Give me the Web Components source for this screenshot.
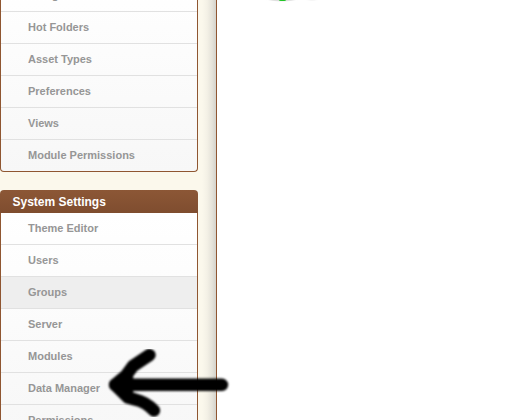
<!DOCTYPE html>
<html lang="en">
<head>
<meta charset="utf-8">
<title>System Settings</title>
<style>
html,body{margin:0;height:420px;overflow:hidden;background:#fff}
</style>
</head>
<body>
<admin-page>
  <menu-panel>
    <menu-item>Categories</menu-item>
    <menu-item>Hot Folders</menu-item>
    <menu-item>Asset Types</menu-item>
    <menu-item>Preferences</menu-item>
    <menu-item>Views</menu-item>
    <menu-item>Module Permissions</menu-item>
  </menu-panel>
  <menu-panel heading="System Settings">
    <menu-item>Theme Editor</menu-item>
    <menu-item>Users</menu-item>
    <menu-item active>Groups</menu-item>
    <menu-item>Server</menu-item>
    <menu-item>Modules</menu-item>
    <menu-item>Data Manager</menu-item>
    <menu-item>Permissions</menu-item>
  </menu-panel>
</admin-page>
<script>
class AdminPage extends HTMLElement {
  constructor() {
    super();
    this.attachShadow({mode: 'open'}).innerHTML = `
<style>
:host{display:flex;position:relative;width:524px;height:420px;overflow:hidden;background:#fff;font-family:"Liberation Sans",Arial,sans-serif}
aside{box-sizing:border-box;flex:none;width:217px;height:420px;overflow:hidden;border-right:1px solid #8f5631;
 background:linear-gradient(90deg,#fbf8ec 0,#fbf8ec 202px,#f4f1e6 207px,#e5e3da 212px,#d4d3cd 216px)}
nav{display:flex;flex-direction:column;gap:18px;width:198px;margin-top:-20px}
main{flex:1;overflow:hidden}
.hint{display:block;margin-left:45px}
.arrow{position:absolute;left:100px;top:340px}
</style>
<aside><nav><slot></slot></nav></aside>
<main><svg class="hint" width="70" height="6" viewBox="0 0 70 6">
<defs><filter id="h" x="-20%" y="-200%" width="140%" height="500%"><feGaussianBlur stdDeviation="1.4 .6"/></filter><filter id="g" x="-50%" y="-200%" width="200%" height="500%"><feGaussianBlur stdDeviation=".7 .3"/></filter></defs>
<ellipse cx="20" cy="-.5" rx="13" ry="1.7" fill="#dedede" filter="url(#h)"/>
<ellipse cx="50" cy="-.8" rx="7" ry="1.2" fill="#e6e6e6" filter="url(#h)"/>
<ellipse cx="20.5" cy="-.3" rx="3.8" ry="1.3" fill="#20c528" filter="url(#g)"/>
</svg></main>
<svg class="arrow" width="140" height="80" viewBox="0 0 140 80">
<defs><filter id="b" x="-10%" y="-10%" width="120%" height="120%"><feGaussianBlur stdDeviation="1.1"/></filter></defs>
<g fill="none" stroke="#000" stroke-width="12.4" stroke-linecap="round" stroke-linejoin="round" filter="url(#b)">
<path d="M122 44.8H15L26 35.5L33 26L49.5 15"/><path d="M15 44.8L28 57.5L35 59.5Q46 62 54 70.5"/><path fill="#000" d="M16 45L27 37V54Z"/></g>
</svg>`;
  }
}
class MenuPanel extends HTMLElement {
  constructor() {
    super();
    const h = this.getAttribute('heading');
    this.attachShadow({mode: 'open'}).innerHTML = `
<style>
:host{display:block;flex:none;box-sizing:border-box;width:198px}
header{box-sizing:border-box;height:23px;padding-left:12.5px;border-radius:4px 4px 0 0;background:linear-gradient(#8c5736,#7f4d2f);color:#fff;font-weight:bold;font-size:12px;line-height:24px}
.list{box-sizing:border-box;border:1px solid #8f5631;border-top:0;border-radius:0 0 4px 4px;overflow:hidden;background:linear-gradient(#fff,#f7f7f7)}
</style>
${h ? '<header></header>' : ''}<div class="list"><slot></slot></div>`;
    if (h) this.shadowRoot.querySelector('header').textContent = h;
  }
}
class MenuItem extends HTMLElement {
  constructor() {
    super();
    this.attachShadow({mode: 'open'}).innerHTML = `
<style>
:host{display:block;box-sizing:border-box;height:32px;padding-left:27px;border-bottom:1px solid #e1e1e1;color:#969696;font-weight:bold;font-size:11px;line-height:31px}
:host([active]){background:#eee}
:host(:last-child){height:31px;border-bottom:0}
</style><slot></slot>`;
  }
}
customElements.define('menu-item', MenuItem);
customElements.define('menu-panel', MenuPanel);
customElements.define('admin-page', AdminPage);
</script>
</body>
</html>
